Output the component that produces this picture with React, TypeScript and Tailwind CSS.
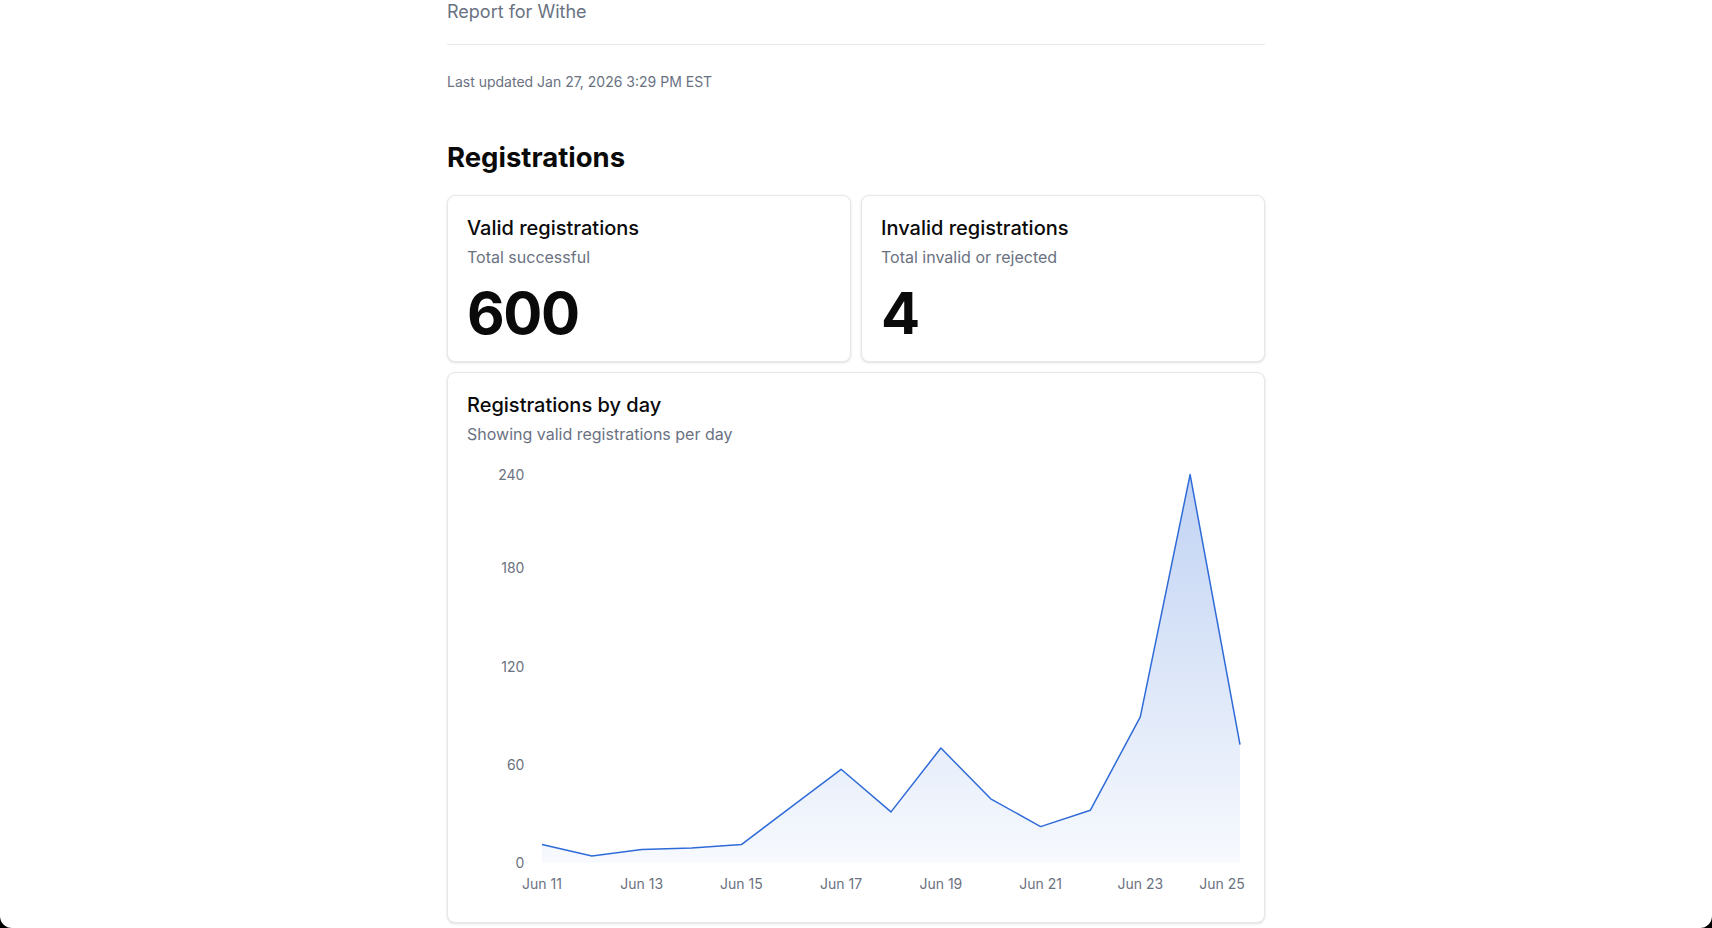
const days = [
  { label: "Jun 11", value: 11 },
  { label: "Jun 12", value: 4 },
  { label: "Jun 13", value: 8 },
  { label: "Jun 14", value: 9 },
  { label: "Jun 15", value: 11 },
  { label: "Jun 16", value: 34 },
  { label: "Jun 17", value: 57 },
  { label: "Jun 18", value: 31 },
  { label: "Jun 19", value: 70 },
  { label: "Jun 20", value: 39 },
  { label: "Jun 21", value: 22 },
  { label: "Jun 22", value: 32 },
  { label: "Jun 23", value: 89 },
  { label: "Jun 24", value: 237 },
  { label: "Jun 25", value: 72 },
];

// chart geometry (px inside the svg)
const CHART_W = 778;
const CHART_H = 447;
const ZERO_Y = 407.6;
const PER_UNIT = 1.637;
const X0 = 75;
const STEP = 49.857;

const yTicks = [
  { label: "240", y: 25 },
  { label: "180", y: 118.3 },
  { label: "120", y: 216.7 },
  { label: "60", y: 315 },
  { label: "0", y: 412.7 },
];

const StatCard = ({ title, subtitle, value }: { title: string; subtitle: string; value: string }) => (
  <div className="rounded-lg border border-gray-200 bg-white px-[19px] pt-[18px] pb-[19px] shadow-sm">
    <h3 className="text-xl leading-7 font-medium text-[#0a0a0a]">{title}</h3>
    <p className="mt-[3px] text-base leading-6 text-gray-500">{subtitle}</p>
    <p className="mt-[15px] text-[58px] leading-[58px] font-bold tracking-tight text-[#0a0a0a]">{value}</p>
  </div>
);

const RegistrationsChart = () => {
  const pts = days.map((d, i) => ({ x: X0 + i * STEP, y: ZERO_Y - d.value * PER_UNIT, label: d.label }));
  const line = pts.map((p, i) => `${i === 0 ? "M" : "L"}${p.x.toFixed(1)},${p.y.toFixed(1)}`).join(" ");
  const last = pts[pts.length - 1];
  const area = `${line} L${last.x.toFixed(1)},${ZERO_Y} L${pts[0].x.toFixed(1)},${ZERO_Y} Z`;
  const topY = Math.min(...pts.map((p) => p.y));

  return (
    <svg width={CHART_W} height={CHART_H} className="mt-[9px] block overflow-visible">
      <defs>
        <linearGradient id="regFill" x1="0" y1={topY} x2="0" y2={ZERO_Y} gradientUnits="userSpaceOnUse">
          <stop offset="0%" stopColor="#2f6bd8" stopOpacity={0.3} />
          <stop offset="100%" stopColor="#2f6bd8" stopOpacity={0.04} />
        </linearGradient>
      </defs>
      {yTicks.map((t) => (
        <text key={t.label} x={57.4} y={t.y} textAnchor="end" fontSize={14} fill="#6b7280" fontFamily="Inter, sans-serif">
          {t.label}
        </text>
      ))}
      <path d={area} fill="url(#regFill)" />
      <path d={line} fill="none" stroke="#2f6bd8" strokeWidth={1.5} strokeLinejoin="round" />
      {pts.map((p, i) =>
        i % 2 === 0 ? (
          <text
            key={p.label}
            x={i === pts.length - 1 ? CHART_W - 0.3 : p.x}
            y={434}
            textAnchor={i === pts.length - 1 ? "end" : "middle"}
            fontSize={14}
            fill="#6b7280"
            fontFamily="Inter, sans-serif"
          >
            {p.label}
          </text>
        ) : null
      )}
    </svg>
  );
};

export default function App() {
  return (
    <div className="h-[928px] bg-black">
      <div className="h-full overflow-hidden rounded-b-[12px] bg-white font-['Inter',sans-serif]">
        <div className="mx-auto -mt-[2px] w-[818px]">
          <div className="border-b border-gray-200 pb-[18px]">
            <p className="text-lg leading-7 text-gray-500">Report for Withe</p>
          </div>
          <p className="mt-[27px] text-sm leading-5 text-gray-500">Last updated Jan 27, 2026 3:29 PM EST</p>
          <h2 className="mt-[47px] text-[27.5px] leading-9 font-bold text-[#0a0a0a]">Registrations</h2>

          <div className="mt-5 grid grid-cols-2 gap-2.5">
            <StatCard title="Valid registrations" subtitle="Total successful" value="600" />
            <StatCard title="Invalid registrations" subtitle="Total invalid or rejected" value="4" />
          </div>

          <div className="mt-2.5 rounded-lg border border-gray-200 bg-white px-[19px] pt-[18px] pb-5 shadow-sm">
            <h3 className="text-xl leading-7 font-medium text-[#0a0a0a]">Registrations by day</h3>
            <p className="mt-[3px] text-base leading-6 text-gray-500">Showing valid registrations per day</p>
            <RegistrationsChart />
          </div>
        </div>
      </div>
    </div>
  );
}
